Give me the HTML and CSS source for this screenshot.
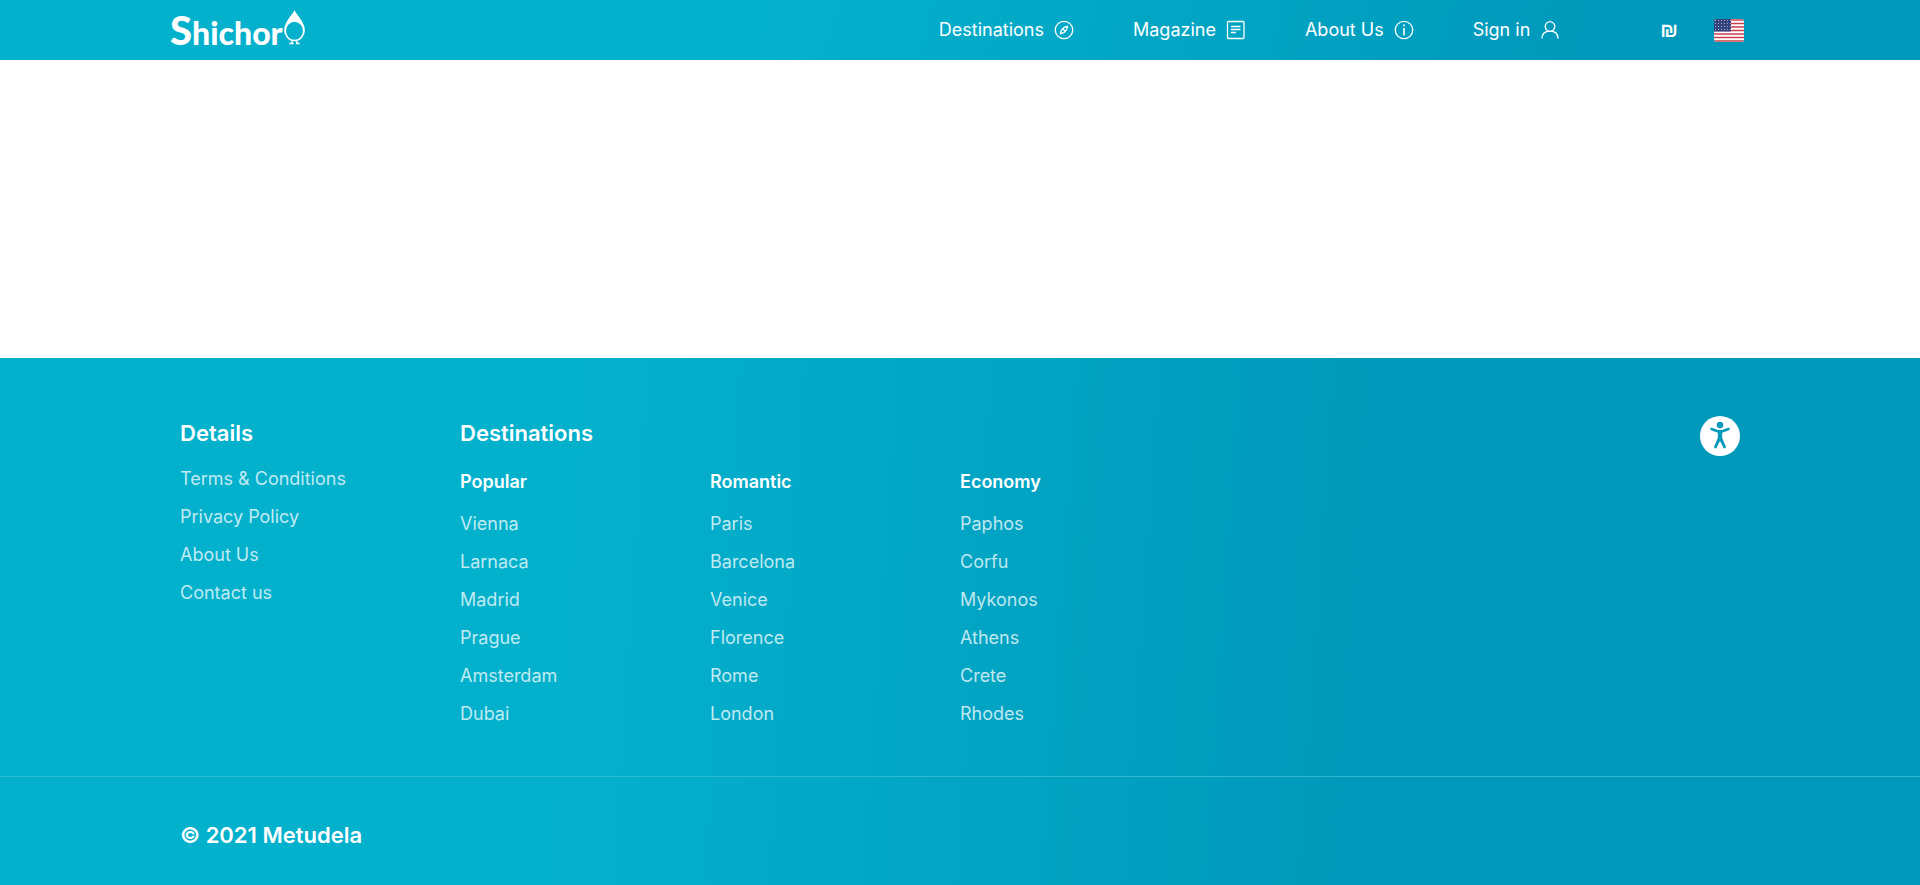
FILE: index.html
```html
<!DOCTYPE html>
<html lang="en">
<head>
<meta charset="utf-8">
<meta name="viewport" content="width=device-width, initial-scale=1">
<title>Shichor</title>
<link rel="stylesheet" href="styles.css">
</head>
<body>
<header class="header">
  <a class="logo" href="#" aria-label="Shichor home">
    <span class="logo-word"><span class="logo-initial">S</span>hichor</span>
    <svg class="logo-mark" viewBox="0 0 24 37" aria-hidden="true">
      <path fill="#fff" fill-rule="evenodd" d="M12 0C10.500 4.500 1 12.500 1 21.500A11 11.500 0 0 0 23 21.500C23 12.500 13.500 4.500 12 0ZM12 12.500A9 9.500 0 1 1 12 31.500A9 9.500 0 1 1 12 12.500Z"/>
      <path d="M9.500 32.500V35.500H6.500M14.500 32.500V35.500H17.500M9.500 35.500H11M14.500 35.500H13.500" fill="none" stroke="#fff" stroke-width="1.500"/>
    </svg>
  </a>
  <nav class="nav" aria-label="Main">
    <a class="nav-link" href="#">Destinations
      <svg class="icon" viewBox="0 0 20 20" aria-hidden="true"><circle cx="10" cy="10" r="8.700"/><path d="M13.500 6.300C9.500 6.800 7 8.500 6.500 13.700C10.500 13.200 13 11.500 13.500 6.300ZM9 9L11 11"/></svg>
    </a>
    <a class="nav-link" href="#">Magazine
      <svg class="icon" viewBox="0 0 20 20" aria-hidden="true"><rect x="1.500" y="1.500" width="16.500" height="17" rx="1"/><path d="M5 6.500H14.500M5 9.500H14.500M5 12.500H10"/></svg>
    </a>
    <a class="nav-link" href="#">About Us
      <svg class="icon" viewBox="0 0 20 20" aria-hidden="true"><circle cx="10" cy="10" r="8.700"/><path d="M10 8V15.500M10 4.500V6.200" stroke-width="1.600"/></svg>
    </a>
    <a class="nav-link" href="#">Sign in
      <svg class="icon" viewBox="0 0 20 20" aria-hidden="true"><circle cx="10" cy="6.500" r="4.800"/><path d="M2 18.500C2 13.500 5 11.200 10 11.200S18 13.500 18 18.500"/></svg>
    </a>
  </nav>
  <div class="settings">
    <button class="currency" type="button" aria-label="Currency">₪</button>
    <button class="language" type="button" aria-label="Language: English">
      <svg class="flag" viewBox="0 0 30 23" aria-hidden="true">
        <defs>
          <clipPath id="flag-shape"><rect width="30" height="23" rx="3"/></clipPath>
          <pattern id="stars" width="3" height="3" patternUnits="userSpaceOnUse"><path d="M1 1h1v1h-1z" fill="#a9b0cf"/></pattern>
        </defs>
        <g clip-path="url(#flag-shape)">
          <path fill="#fff" d="M0 0h30v23H0z"/>
          <path stroke="#c8414b" stroke-width="1.700" d="M0 1h30M0 4.500h30M0 8h30M0 11.500h30M0 15h30M0 18.500h30M0 22h30"/>
          <path fill="#34437e" d="M0 0h17v12.500H0z"/>
          <path fill="url(#stars)" d="M0 0h17v12.500H0z"/>
        </g>
      </svg>
    </button>
  </div>
</header>
<main class="main"></main>
<footer class="footer">
  <div class="footer-top">
    <section class="details">
      <h2 class="title">Details</h2>
      <ul class="links">
        <li><a href="#">Terms &amp; Conditions</a></li>
        <li><a href="#">Privacy Policy</a></li>
        <li><a href="#">About Us</a></li>
        <li><a href="#">Contact us</a></li>
      </ul>
    </section>
    <section class="destinations">
      <h2 class="title">Destinations</h2>
      <div class="columns">
        <div>
          <h3 class="subtitle">Popular</h3>
          <ul class="links">
            <li><a href="#">Vienna</a></li>
            <li><a href="#">Larnaca</a></li>
            <li><a href="#">Madrid</a></li>
            <li><a href="#">Prague</a></li>
            <li><a href="#">Amsterdam</a></li>
            <li><a href="#">Dubai</a></li>
          </ul>
        </div>
        <div>
          <h3 class="subtitle">Romantic</h3>
          <ul class="links">
            <li><a href="#">Paris</a></li>
            <li><a href="#">Barcelona</a></li>
            <li><a href="#">Venice</a></li>
            <li><a href="#">Florence</a></li>
            <li><a href="#">Rome</a></li>
            <li><a href="#">London</a></li>
          </ul>
        </div>
        <div>
          <h3 class="subtitle">Economy</h3>
          <ul class="links">
            <li><a href="#">Paphos</a></li>
            <li><a href="#">Corfu</a></li>
            <li><a href="#">Mykonos</a></li>
            <li><a href="#">Athens</a></li>
            <li><a href="#">Crete</a></li>
            <li><a href="#">Rhodes</a></li>
          </ul>
        </div>
      </div>
    </section>
    <button class="accessibility" type="button" aria-label="Accessibility">
      <svg viewBox="0 0 40 40" aria-hidden="true">
        <circle cx="20" cy="20" r="20" fill="#fff"/>
        <circle cx="20" cy="9" r="3.200" fill="#0099bb"/>
        <path d="M11.500 13L17.500 15.200H22.500L28.500 13" fill="none" stroke="#0099bb" stroke-width="2.600" stroke-linecap="round" stroke-linejoin="round"/>
        <path d="M17.800 15H22.200V22L25.800 30.500A1.300 1.300 0 0 1 23.300 31.500L20 25L16.700 31.500A1.300 1.300 0 0 1 14.200 30.500L17.800 22Z" fill="#0099bb"/>
      </svg>
    </button>
  </div>
  <div class="footer-bottom">© 2021 Metudela</div>
</footer>
</body>
</html>
```
FILE: styles.css
```css
* { box-sizing: border-box; }

body {
  margin: 0;
  min-height: 100vh;
  display: flex;
  flex-direction: column;
  background: #fff;
  color: #fff;
  font-family: Inter, "Liberation Sans", sans-serif;
  font-size: 18px;
  line-height: 24px;
}

a { color: inherit; text-decoration: none; }

button {
  padding: 0;
  border: 0;
  background: none;
  color: inherit;
  font: inherit;
  cursor: pointer;
}

svg { display: block; }

.header {
  display: flex;
  align-items: center;
  height: 60px;
  padding: 0 176px 0 170px;
  background: linear-gradient(105deg, #04b1cd 40%, #0099bb 82%);
}

.logo {
  display: flex;
  align-items: baseline;
  margin-right: auto;
  padding-top: 2px;
}

.logo-word {
  font-family: Lato, sans-serif;
  font-size: 32px;
  font-weight: 900;
  line-height: 44px;
}

.logo-initial { font-size: 40px; }

.logo-mark { width: 23px; height: 35px; }

.nav { display: flex; gap: 59px; }

.nav-link {
  display: flex;
  align-items: center;
  gap: 10px;
}

.icon {
  width: 20px;
  height: 20px;
  fill: none;
  stroke: #fff;
  stroke-width: 1.3;
}

.settings {
  display: flex;
  align-items: center;
  gap: 36px;
  margin-left: 100px;
}

.currency {
  font-family: "Liberation Sans", sans-serif;
  font-size: 20px;
  font-weight: 700;
}

.flag { width: 30px; height: 23px; }

.main { flex: 1; }

.footer { background: linear-gradient(94deg, #04b1cd 30%, #0099bb 70%); }

.footer-top {
  display: flex;
  align-items: flex-start;
  padding: 58px 180px 50px;
  border-bottom: 1px solid #2fb9d1;
}

.details { width: 280px; }

.title {
  margin: 0;
  font-size: 22px;
  font-weight: 600;
  line-height: 34px;
}

.details .links { margin-top: 17px; }

.columns {
  display: grid;
  grid-template-columns: repeat(3, 250px);
  margin-top: 20px;
}

.subtitle {
  margin: 0 0 18px;
  font-size: 18px;
  font-weight: 600;
  line-height: 24px;
}

.links {
  display: grid;
  gap: 14px;
  margin: 0;
  padding: 0;
  list-style: none;
  color: rgba(255, 255, 255, 0.75);
}

.accessibility {
  width: 40px;
  height: 40px;
  margin-left: auto;
}

.footer-bottom {
  padding: 41px 180px 33px;
  font-size: 22px;
  font-weight: 600;
  line-height: 34px;
}
```
